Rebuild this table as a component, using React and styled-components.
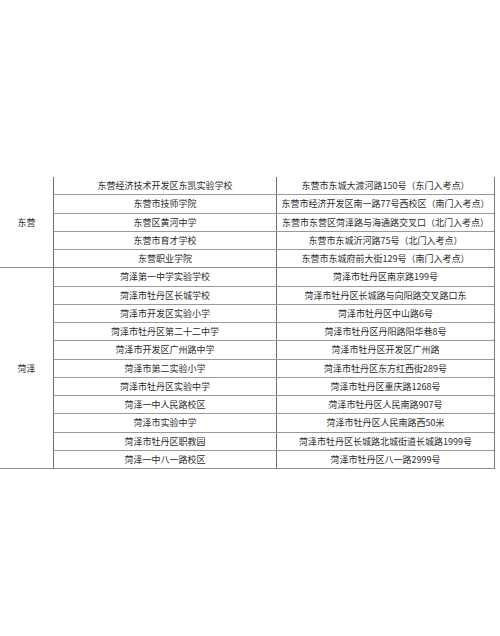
import React from 'react';
import styled, { createGlobalStyle } from 'styled-components';

const GlobalStyle = createGlobalStyle`
    html, body {
        margin: 0;
        padding: 0;
        background: #ffffff;
    }
    body {
        font-family: "Noto Sans CJK SC", "Noto Sans", sans-serif;
        color: #2b2b2b;
    }
`

const Page = styled.div`
    width: 500px;
    height: 636px;
    padding-top: 177px;
    box-sizing: border-box;
    background: #ffffff;
`

const Table = styled.div`
    width: 495px;
    border-right: 1px solid #7a7a7a;
    box-sizing: border-box;
`

const Group = styled.div`
    display: flex;
    border-bottom: 1px solid #8a8a8a;
`

const GroupLabel = styled.div`
    width: 54px;
    flex-shrink: 0;
    box-sizing: border-box;
    border-right: 1px solid #6f6f6f;
    display: flex;
    align-items: center;
    justify-content: center;
    font-size: 9px;
    padding-bottom: ${p => p.$offset || 0}px;
`

const Rows = styled.div`
    flex: 1;
    display: flex;
    flex-direction: column;
`

const Row = styled.div`
    display: grid;
    grid-template-columns: 222px 1fr;
    height: 17.25px;
    border-bottom: 1px solid #9a9a9a;
    &:last-child {
        border-bottom: none;
    }
`

const Cell = styled.div`
    display: flex;
    align-items: center;
    justify-content: center;
    font-size: 9px;
    line-height: 1;
    white-space: nowrap;
    border-left: ${p => (p.$divider ? '1px solid #6f6f6f' : 'none')};
`

const groups = [
    {
        city: '东营',
        rows: [
            ['东营经济技术开发区东凯实验学校', '东营市东城大渡河路150号（东门入考点）'],
            ['东营市技师学院', '东营市经济开发区南一路77号西校区（南门入考点）'],
            ['东营区黄河中学', '东营市东营区菏泽路与海通路交叉口（北门入考点）'],
            ['东营市育才学校', '东营市东城沂河路75号（北门入考点）'],
            ['东营职业学院', '东营市东城府前大街129号（南门入考点）'],
        ],
    },
    {
        city: '菏泽',
        rows: [
            ['菏泽第一中学实验学校', '菏泽市牡丹区南京路199号'],
            ['菏泽市牡丹区长城学校', '菏泽市牡丹区长城路与向阳路交叉路口东'],
            ['菏泽市开发区实验小学', '菏泽市牡丹区中山路6号'],
            ['菏泽市牡丹区第二十二中学', '菏泽市牡丹区丹阳路阳华巷8号'],
            ['菏泽市开发区广州路中学', '菏泽市牡丹区开发区广州路'],
            ['菏泽市第二实验小学', '菏泽市牡丹区东方红西街289号'],
            ['菏泽市牡丹区实验中学', '菏泽市牡丹区重庆路1268号'],
            ['菏泽一中人民路校区', '菏泽市牡丹区人民南路907号'],
            ['菏泽市实验中学', '菏泽市牡丹区人民南路西50米'],
            ['菏泽市牡丹区职教园', '菏泽市牡丹区长城路北城街道长城路1999号'],
            ['菏泽一中八一路校区', '菏泽市牡丹区八一路2999号'],
        ],
    },
];

const App = () => {
    return (
        <Page>
            <GlobalStyle />
            <Table>
                {groups.map(group => (
                    <Group key={group.city}>
                        <GroupLabel>{group.city}</GroupLabel>
                        <Rows>
                            {group.rows.map(([school, address]) => (
                                <Row key={school}>
                                    <Cell>{school}</Cell>
                                    <Cell $divider>{address}</Cell>
                                </Row>
                            ))}
                        </Rows>
                    </Group>
                ))}
            </Table>
        </Page>
    );
}

export default App;
